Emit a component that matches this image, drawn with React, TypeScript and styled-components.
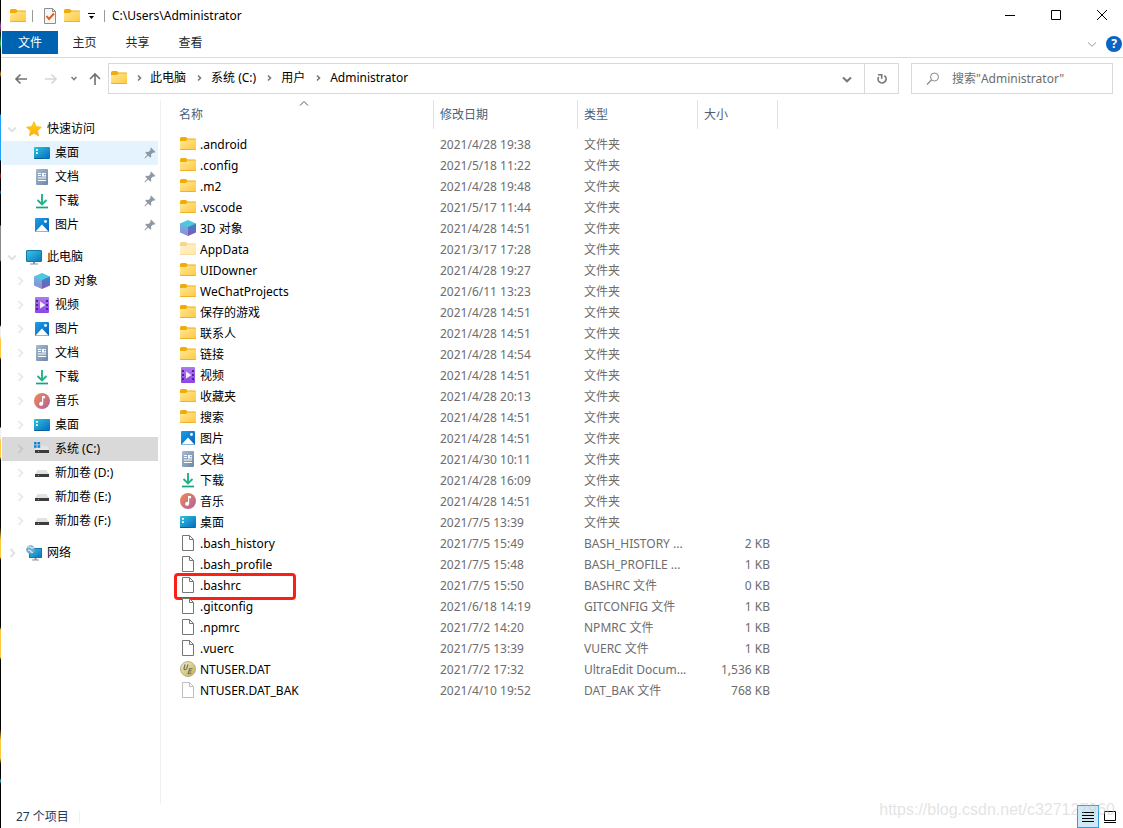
import React from "react";
import styled, { createGlobalStyle, css } from "styled-components";

/* ---------- data ---------- */

type IconName =
  | "folder" | "folderFaded" | "cube" | "video" | "picture" | "document" | "download"
  | "music" | "desktop" | "file" | "fileFaded" | "ultraedit" | "star" | "computer"
  | "systemDrive" | "drive" | "network";

interface FileEntry {
  icon: IconName;
  name: string;
  date: string;
  type: string;
  size?: string;
  marked?: boolean;
}

const FOLDER = "文件夹";

const files: FileEntry[] = [
  { icon: "folder", name: ".android", date: "2021/4/28 19:38", type: FOLDER },
  { icon: "folder", name: ".config", date: "2021/5/18 11:22", type: FOLDER },
  { icon: "folder", name: ".m2", date: "2021/4/28 19:48", type: FOLDER },
  { icon: "folder", name: ".vscode", date: "2021/5/17 11:44", type: FOLDER },
  { icon: "cube", name: "3D 对象", date: "2021/4/28 14:51", type: FOLDER },
  { icon: "folderFaded", name: "AppData", date: "2021/3/17 17:28", type: FOLDER },
  { icon: "folder", name: "UIDowner", date: "2021/4/28 19:27", type: FOLDER },
  { icon: "folder", name: "WeChatProjects", date: "2021/6/11 13:23", type: FOLDER },
  { icon: "folder", name: "保存的游戏", date: "2021/4/28 14:51", type: FOLDER },
  { icon: "folder", name: "联系人", date: "2021/4/28 14:51", type: FOLDER },
  { icon: "folder", name: "链接", date: "2021/4/28 14:54", type: FOLDER },
  { icon: "video", name: "视频", date: "2021/4/28 14:51", type: FOLDER },
  { icon: "folder", name: "收藏夹", date: "2021/4/28 20:13", type: FOLDER },
  { icon: "folder", name: "搜索", date: "2021/4/28 14:51", type: FOLDER },
  { icon: "picture", name: "图片", date: "2021/4/28 14:51", type: FOLDER },
  { icon: "document", name: "文档", date: "2021/4/30 10:11", type: FOLDER },
  { icon: "download", name: "下载", date: "2021/4/28 16:09", type: FOLDER },
  { icon: "music", name: "音乐", date: "2021/4/28 14:51", type: FOLDER },
  { icon: "desktop", name: "桌面", date: "2021/7/5 13:39", type: FOLDER },
  { icon: "file", name: ".bash_history", date: "2021/7/5 15:49", type: "BASH_HISTORY ...", size: "2 KB" },
  { icon: "file", name: ".bash_profile", date: "2021/7/5 15:48", type: "BASH_PROFILE ...", size: "1 KB" },
  { icon: "file", name: ".bashrc", date: "2021/7/5 15:50", type: "BASHRC 文件", size: "0 KB", marked: true },
  { icon: "file", name: ".gitconfig", date: "2021/6/18 14:19", type: "GITCONFIG 文件", size: "1 KB" },
  { icon: "file", name: ".npmrc", date: "2021/7/2 14:20", type: "NPMRC 文件", size: "1 KB" },
  { icon: "file", name: ".vuerc", date: "2021/7/5 13:39", type: "VUERC 文件", size: "1 KB" },
  { icon: "ultraedit", name: "NTUSER.DAT", date: "2021/7/2 17:32", type: "UltraEdit Docum...", size: "1,536 KB" },
  { icon: "fileFaded", name: "NTUSER.DAT_BAK", date: "2021/4/10 19:52", type: "DAT_BAK 文件", size: "768 KB" },
];

interface TreeNode {
  icon: IconName;
  label: string;
  pinned?: boolean;
  state?: "hover" | "current";
}

interface TreeGroup extends TreeNode {
  open?: boolean;
  children: TreeNode[];
}

const tree: TreeGroup[] = [
  {
    icon: "star", label: "快速访问", open: true,
    children: [
      { icon: "desktop", label: "桌面", pinned: true, state: "hover" },
      { icon: "document", label: "文档", pinned: true },
      { icon: "download", label: "下载", pinned: true },
      { icon: "picture", label: "图片", pinned: true },
    ],
  },
  {
    icon: "computer", label: "此电脑", open: true,
    children: [
      { icon: "cube", label: "3D 对象" },
      { icon: "video", label: "视频" },
      { icon: "picture", label: "图片" },
      { icon: "document", label: "文档" },
      { icon: "download", label: "下载" },
      { icon: "music", label: "音乐" },
      { icon: "desktop", label: "桌面" },
      { icon: "systemDrive", label: "系统 (C:)", state: "current" },
      { icon: "drive", label: "新加卷 (D:)" },
      { icon: "drive", label: "新加卷 (E:)" },
      { icon: "drive", label: "新加卷 (F:)" },
    ],
  },
  { icon: "network", label: "网络", children: [] },
];

/* ---------- icons ---------- */

const Svg = styled.svg`
  display: block;
  flex: none;
`;

const gradient = (id: string, from: string, to: string, diagonal = false) => (
  <linearGradient id={id} x1="0" y1="0" x2={diagonal ? "1" : "0"} y2="1">
    <stop offset="0" stopColor={from} />
    <stop offset="1" stopColor={to} />
  </linearGradient>
);

const pageShape = "M2.5 .5h7l4 4v11h-11z";

const shapes: Record<IconName, (id: string) => React.ReactNode> = {
  folder: (id) => (
    <>
      {gradient(id, "#ffe799", "#ffc93f", true)}
      <path d="M0 2.5Q0 1 1.5 1H6l1.5 1.5H15q1 0 1 1V7H0z" fill="#f2ac08" />
      <path d="M0 5h6l1.5-1.5H16V13q0 1-1 1H1q-1 0-1-1z" fill={`url(#${id})`} />
      <path d="M0 13h16q0 1-1 1H1q-1 0-1-1z" fill="#eeb12b" />
    </>
  ),
  folderFaded: (id) => (
    <>
      {gradient(id, "#fff4cf", "#ffe6a3", true)}
      <path d="M0 2.5Q0 1 1.5 1H6l1.5 1.5H15q1 0 1 1V7H0z" fill="#f8d588" />
      <path d="M0 5h6l1.5-1.5H16V13q0 1-1 1H1q-1 0-1-1z" fill={`url(#${id})`} />
      <path d="M0 13h16q0 1-1 1H1q-1 0-1-1z" fill="#f5dba0" />
    </>
  ),
  cube: (id) => (
    <>
      {gradient(id, "#6db6df", "#8f8ad6")}
      {gradient(`${id}r`, "#3388c9", "#8a56b8")}
      <path d="M8 0l8 3.5V4L8 8 0 4v-.5z" fill="#4cc8e0" />
      <path d="M0 3.500l8 3.500v9l-8-3.500z" fill={`url(#${id})`} />
      <path d="M16 3.500l-8 3.500v9l8-3.500z" fill={`url(#${id}r)`} />
    </>
  ),
  video: (id) => (
    <>
      {gradient(id, "#b078f0", "#8b45e6")}
      <rect x="1" y="0" width="14" height="16" rx="1" fill={`url(#${id})`} />
      <path d="M2 3h2v2H2zM2 7h2v2H2zM2 11h2v2H2zM12 3h2v2h-2zM12 7h2v2h-2zM12 11h2v2h-2z" fill="#4f2590" />
      <path d="M6 4.500L11.500 8 6 11.500z" fill="#f4eefc" />
    </>
  ),
  picture: (id) => (
    <>
      {gradient(id, "#1ba0e8", "#0561b8", true)}
      <rect x="1" y="1" width="14" height="14" rx="1" fill={`url(#${id})`} />
      <path d="M1.500 14.500L8 7.500l6.500 7z" fill="#fff" />
      <circle cx="11.500" cy="4.500" r="1.400" fill="#fff" />
    </>
  ),
  document: (id) => (
    <>
      {gradient(id, "#a7bad0", "#6d88a6", true)}
      <rect x="2" y="0" width="12" height="16" rx="1" fill={`url(#${id})`} />
      <path d="M4 4h3v1H4zM4 6h3v1H4zM8 4h4v3.500H8zM4 8.500h8v1H4zM4 11h8v1H4z" fill="#fff" />
      <path d="M10 4.800h1.500v1.500H10z" fill="#7790ad" />
    </>
  ),
  download: () => (
    <>
      <path d="M8 1v10M3.500 7L8 11.500 12.500 7" fill="none" stroke="#1fb488" strokeWidth="1.900" />
      <path d="M2 14.500h12" stroke="#16a085" strokeWidth="1.700" />
    </>
  ),
  music: (id) => (
    <>
      {gradient(id, "#f18a52", "#b35fa0", true)}
      <circle cx="8" cy="8" r="8" fill={`url(#${id})`} />
      <path d="M8 3h3v2.200H9.200v5.600a2 2 0 1 1-1.200-1.800z" fill="#fff" />
    </>
  ),
  desktop: (id) => (
    <>
      {gradient(id, "#2cc4e0", "#0867bd", true)}
      <rect x="0" y="2" width="16" height="12" rx="1" fill={`url(#${id})`} />
      <path d="M2 4h1.800v1.800H2zM2 7.300h1.800v1.800H2z" fill="#fff" />
      <path d="M0 13h10v1H1q-1 0-1-1zM11 13h1v1h-1zM13 13h1v1h-1z" fill="#0a5d96" />
    </>
  ),
  file: () => (
    <>
      <path d={pageShape} fill="#fff" stroke="#767676" />
      <path d="M9.500 .5v4h4" fill="none" stroke="#767676" />
    </>
  ),
  fileFaded: () => (
    <>
      <path d={pageShape} fill="#fff" stroke="#c0c0c0" />
      <path d="M9.500 .5v4h4" fill="none" stroke="#c0c0c0" />
    </>
  ),
  ultraedit: (id) => (
    <>
      {gradient(id, "#f5efc4", "#c4ac4c", true)}
      <circle cx="8" cy="8" r="7.500" fill={`url(#${id})`} stroke="#b3ae94" />
      <path d="M5 3.500L4 7.500q0 1.500 1.500 1 1.300-.4 1.600-2l.7-3M12.500 7.500l-3 .3-1.200 4.700 3-.3M9 10l2.500-.3" fill="none" stroke="#6f7268" strokeWidth="1.200" />
    </>
  ),
  star: (id) => (
    <>
      {gradient(id, "#ffd60a", "#fbac10")}
      <path d="M8 .8l2.200 4.800 5.200.6-3.900 3.500 1.100 5.200L8 12.300l-4.600 2.600 1.100-5.200L.6 6.200l5.200-.6z" fill={`url(#${id})`} stroke="#f9b71c" strokeWidth=".8" />
    </>
  ),
  computer: (id) => (
    <>
      {gradient(id, "#37cce0", "#0b72bd", true)}
      <rect x=".5" y="1.500" width="15" height="11" rx=".5" fill={`url(#${id})`} stroke="#1477ab" />
      <path d="M7 13h2v1.500h3v1H4v-1h3z" fill="#8495a3" />
    </>
  ),
  systemDrive: () => (
    <>
      <path d="M0 1h2.600v2.500H0zM3.500 1h2.600v2.500H3.500zM0 4.300h2.600v2.500H0zM3.500 4.300h2.600v2.500H3.500z" fill="#0c84d8" />
      <path d="M7 5h6l2 4H1l1-2h5z" fill="#e3e5e9" />
      <rect x="1" y="9" width="14" height="3" fill="#3c3c3c" />
      <path d="M4 10h1v1H4z" fill="#39e05b" />
    </>
  ),
  drive: () => (
    <>
      <path d="M3.500 5h9L15 9H1z" fill="#dfe1e5" />
      <rect x="1" y="9" width="14" height="3" fill="#3c3c3c" />
      <path d="M4 10h1v1H4z" fill="#39e05b" />
    </>
  ),
  network: (id) => (
    <>
      {gradient(id, "#37c4e4", "#0b72bd", true)}
      <rect x="3.500" y="3.500" width="12" height="9" fill={`url(#${id})`} stroke="#1477ab" />
      <path d="M8.500 13h2v1.500H13v1H6v-1h2.500z" fill="#8495a3" />
      <circle cx="4.500" cy="4.500" r="4.300" fill="#6fa9cc" />
      <path d="M1.500 2.500q2-1.500 3.500 0t2.500-.5M2 5.500q2-1 2.500.5T7 7.500" fill="none" stroke="#d8edf6" strokeWidth="1.200" />
    </>
  ),
};

const Icon = ({ name }: { name: IconName }) => {
  const id = "g" + React.useId().replace(/[^a-zA-Z0-9]/g, "");
  return (
    <Svg width="16" height="16" viewBox="0 0 16 16" aria-hidden="true">
      {shapes[name](id)}
    </Svg>
  );
};

interface GlyphProps {
  d: string;
  size?: number;
  color?: string;
  weight?: number;
}

const Glyph = ({ d, size = 16, color = "#000", weight = 1 }: GlyphProps) => (
  <Svg width={size} height={size} viewBox={`0 0 ${size} ${size}`} aria-hidden="true">
    <path d={d} fill="none" stroke={color} strokeWidth={weight} />
  </Svg>
);

const glyphs = {
  chevronDown: "M1 3.500L5 7.300l4-3.800",
  chevronRight: "M3.500 1L7.300 5 3.500 9",
  crumbRight: "M4 2.500L6.500 5 4 7.500",
  back: "M14 8H3M7.500 3.500L3 8l4.500 4.500",
  forward: "M2 8h11M8.500 3.500L13 8l-4.500 4.500",
  up: "M8 14V3M3 8l5-5 5 5",
};

const Pin = () => (
  <Svg width="12" height="12" viewBox="0 0 12 12" aria-hidden="true">
    <path d="M7 .5l4.500 4.500-1.300.7-1-.3L7 7.600l.2 2.200-1 .9L4.200 8.600 1 11.500l-.6-.5L3.300 7.700 1.300 5.800l1-1 2.200.2 2.200-2.200-.4-1z" fill="#8c98a4" />
  </Svg>
);

/* ---------- shell ---------- */

const GlobalStyle = createGlobalStyle`
  * { box-sizing: border-box; }
  body {
    margin: 0;
    background: #fff;
    font: 12px/16px "Noto Sans", "Noto Sans CJK SC", sans-serif;
    color: #000;
  }
  button, input {
    font: inherit;
    color: inherit;
    border: 0;
    padding: 0;
    background: none;
  }
  ul, ol { list-style: none; margin: 0; padding: 0; }
`;

const Window = styled.div`
  position: relative;
  display: flex;
  flex-direction: column;
  min-height: 100vh;
  padding-left: 1px;
  background:
    linear-gradient(#000 0 20px, #a3459b 26px, #08160c 34px, #31b54a 44px, #000 50px 70px, #c07a20 74px, #000 78px 114px, #1da2f5 115px 160px, #000 161px 172px, #b01a1a 176px, #000 180px 190px, #2463c8 192px, #000 195px 225px, #888 226px 260px, #000 262px 325px, #eee 327px 337px, #ffc93f 339px 357px, #000 360px 427px, #eee 428px 438px, #ffc93f 440px 457px, #000 460px 527px, #ffc93f 540px 557px, #000 560px 627px, #ffc93f 630px 657px, #000 660px 729px, #ffc93f 740px 758px, #000 764px 778px, #35a6d8 781px, #000 784px)
    left top / 1px 100% no-repeat,
    #fff;
`;

const Spacer = styled.div`
  flex: 1;
`;

/* ---------- title bar ---------- */

const TitleBar = styled.header`
  display: flex;
  align-items: center;
  height: 31px;
  padding-left: 9px;
`;

const QuickButton = styled.button<{ $narrow?: boolean }>`
  display: grid;
  place-items: center;
  width: ${(p) => (p.$narrow ? 12 : 16)}px;
  height: 16px;
`;

const QuickAccess = styled.div`
  display: flex;
  align-items: center;
  gap: 6px;
`;

const Divider = styled.span`
  width: 1px;
  height: 12px;
  margin-right: 3px;
  background: #9a9a9a;
`;

const Title = styled.h1`
  margin: 0 0 0 4px;
  font-size: 12px;
  font-weight: 400;
  line-height: 16px;
`;

const WindowButtons = styled.div`
  display: flex;
  margin-right: -2px;
  overflow: hidden;
`;

const WindowButton = styled.button`
  display: grid;
  place-items: center;
  width: 46px;
  height: 31px;
`;

/* ---------- ribbon ---------- */

const Ribbon = styled.nav`
  display: flex;
  align-items: flex-start;
  height: 27px;
  padding-left: 1px;
  border-bottom: 1px solid #dadbdc;
`;

const RibbonTab = styled.button<{ $primary?: boolean }>`
  width: ${(p) => (p.$primary ? 56 : 53)}px;
  height: 23px;
  padding-top: 1px;
  text-align: center;
  color: ${(p) => (p.$primary ? "#fff" : "#262626")};
  background: ${(p) => (p.$primary ? "#0063b1" : "transparent")};
`;

const RibbonTools = styled.div`
  display: flex;
  align-items: center;
  gap: 8px;
  height: 26px;
  padding-right: 1px;
`;

const HelpButton = styled.button`
  width: 16px;
  height: 16px;
  border-radius: 50%;
  background: #0a64c4;
  color: #fff;
  font-weight: 700;
  line-height: 16px;
  text-align: center;
`;

/* ---------- address row ---------- */

const AddressRow = styled.div`
  display: flex;
  align-items: center;
  padding: 5px 10px 6px 12px;
`;

const NavButtons = styled.div`
  display: flex;
  align-items: center;
  width: 95px;
`;

const NavButton = styled.button<{ $width: number }>`
  display: grid;
  place-items: center start;
  width: ${(p) => p.$width}px;
  height: 24px;
`;

const AddressBox = styled.div`
  display: flex;
  flex: 1;
  height: 31px;
  border: 1px solid #d9d9d9;
`;

const Crumbs = styled.ol`
  display: flex;
  flex: 1;
  align-items: center;
  padding: 0 0 1px 2px;
`;

const CrumbArrow = styled.span`
  display: grid;
  place-items: center;
  width: 25px;
`;

const Crumb = styled.li`
  display: flex;
  align-items: center;
  &:first-of-type ${CrumbArrow} {
    width: 23px;
  }
`;

const CrumbLink = styled.a`
  color: #000;
  text-decoration: none;
`;

const AddressButton = styled.button<{ $ruled?: boolean }>`
  display: grid;
  place-items: center;
  width: 34px;
  border-left: ${(p) => (p.$ruled ? "1px solid #d9d9d9" : "0")};
`;

const SearchBox = styled.label`
  display: flex;
  align-items: center;
  gap: 12px;
  width: 202px;
  height: 31px;
  margin-left: 12px;
  padding-left: 14px;
  border: 1px solid #d9d9d9;
`;

const SearchInput = styled.input`
  flex: 1;
  min-width: 0;
  height: 20px;
  outline: 0;
  &::placeholder {
    color: #6d6d6d;
    opacity: 1;
  }
`;

/* ---------- body ---------- */

const Body = styled.div`
  display: flex;
  flex: 1;
`;

const Sidebar = styled.nav`
  display: flex;
  flex-direction: column;
  gap: 8px;
  width: 160px;
  padding: 17px 2px 0 1px;
  border-right: 1px solid #f0f0f0;
`;

const TreeRow = styled.button<{ $nested?: boolean; $state?: "hover" | "current" }>`
  display: flex;
  align-items: center;
  width: 100%;
  height: 24px;
  padding-left: ${(p) => (p.$nested ? 10 : 2)}px;
  padding-right: 2px;
  text-align: left;
  ${(p) => p.$state === "hover" && css`background: #e5f3ff;`}
  ${(p) => p.$state === "current" && css`background: #d9d9d9;`}
`;

const TreeArrow = styled.span`
  display: grid;
  place-items: center;
  width: 16px;
  margin-right: 6px;
`;

const TreeLabel = styled.span`
  flex: 1;
  margin-left: 5px;
  white-space: nowrap;
`;

const Main = styled.main`
  flex: 1;
  min-width: 0;
`;

const FileTable = styled.table`
  width: 617px;
  table-layout: fixed;
  border-collapse: collapse;
`;

const HeaderCell = styled.th<{ $width: number }>`
  position: relative;
  width: ${(p) => p.$width}px;
  padding: 0 0 5px;
  color: #4c607a;
  font-weight: 400;
  text-align: left;
`;

const HeaderLabel = styled.div<{ $indent: number }>`
  height: 29px;
  padding-left: ${(p) => p.$indent}px;
  border-right: 1px solid #e2e2e2;
  line-height: 29px;
`;

const SortMark = styled.span`
  position: absolute;
  top: -2px;
  left: 50%;
`;

const Cell = styled.td<{ $align?: "right" }>`
  height: 21px;
  padding: 0 8px 0 6px;
  color: #6d6d6d;
  line-height: 20px;
  text-align: ${(p) => p.$align ?? "left"};
  white-space: nowrap;
`;

const NameCell = styled.td`
  position: relative;
  height: 21px;
  padding: 0 0 0 19px;
`;

const FileName = styled.div`
  display: flex;
  align-items: center;
  gap: 4px;
  height: 20px;
  ${Svg} {
    margin-bottom: 2px;
  }
`;

const Marker = styled.span`
  position: absolute;
  inset: -2px auto -4px 13px;
  width: 122px;
  border: 3px solid #fb2016;
  border-radius: 4px;
  pointer-events: none;
`;

/* ---------- status bar ---------- */

const StatusBar = styled.footer`
  display: flex;
  align-items: center;
  height: 24px;
  padding: 1px 2px 0 15px;
  color: #1e395b;
`;

const StatusText = styled.span`
  padding-right: 10px;
  border-right: 1px solid #f0f0f0;
  line-height: 12px;
`;

const ViewButton = styled.button<{ $active?: boolean }>`
  display: grid;
  place-items: center;
  width: 22px;
  height: 23px;
  border: 1px solid ${(p) => (p.$active ? "#2a9fdc" : "transparent")};
  background: ${(p) => (p.$active ? "#cfe8f6" : "transparent")};
`;

const Watermark = styled.span`
  position: absolute;
  right: 8px;
  bottom: 8px;
  color: rgba(200, 200, 200, 0.5);
  font: 16px/20px "Liberation Sans", sans-serif;
  pointer-events: none;
`;

/* ---------- components ---------- */

const TreeItem = ({ node, nested, arrow }: { node: TreeNode; nested?: boolean; arrow?: string }) => (
  <TreeRow type="button" $nested={nested} $state={node.state}>
    <TreeArrow>
      {arrow && (
        <Glyph
          d={arrow}
          size={10}
          color={node.state === "current" ? "#c9c9c9" : nested ? "#ececec" : "#e2e2e2"}
          weight={2}
        />
      )}
    </TreeArrow>
    <Icon name={node.icon} />
    <TreeLabel>{node.label}</TreeLabel>
    {node.pinned && <Pin />}
  </TreeRow>
);

const columns = [
  { label: "名称", width: 273, indent: 18 },
  { label: "修改日期", width: 144, indent: 6 },
  { label: "类型", width: 120, indent: 6 },
  { label: "大小", width: 80, indent: 6 },
];

const crumbs = ["此电脑", "系统 (C:)", "用户", "Administrator"];

export default function App() {
  return (
    <>
      <GlobalStyle />
      <Window>
        <TitleBar>
          <QuickAccess>
            <Icon name="folder" />
            <Divider />
            <QuickButton type="button" aria-label="属性">
              <Svg width="16" height="16" viewBox="0 0 16 16">
                <path d="M2.500 .5h8l3 3v12h-11z" fill="#f5f6f7" stroke="#8d8d8d" />
                <path d="M10.500 .5v3h3" fill="none" stroke="#8d8d8d" />
                <path d="M4.500 8l2.500 3 5-5.500" fill="none" stroke="#e8591c" strokeWidth="1.900" />
              </Svg>
            </QuickButton>
            <QuickButton type="button" aria-label="新建文件夹">
              <Icon name="folder" />
            </QuickButton>
            <QuickButton type="button" $narrow aria-label="自定义快速访问工具栏">
              <Svg width="8" height="8" viewBox="0 0 8 8">
                <path d="M0 1h7v1H0zM1 4h5L3.500 7z" />
              </Svg>
            </QuickButton>
            <Divider />
          </QuickAccess>
          <Title>C:\Users\Administrator</Title>
          <Spacer />
          <WindowButtons>
            <WindowButton type="button" aria-label="最小化">
              <Glyph d="M3 7.500h10" />
            </WindowButton>
            <WindowButton type="button" aria-label="最大化">
              <Glyph d="M3.500 2.500h9v9h-9z" />
            </WindowButton>
            <WindowButton type="button" aria-label="关闭">
              <Glyph d="M3 2l10 10M13 2L3 12" />
            </WindowButton>
          </WindowButtons>
        </TitleBar>

        <Ribbon>
          <RibbonTab type="button" $primary>文件</RibbonTab>
          <RibbonTab type="button">主页</RibbonTab>
          <RibbonTab type="button">共享</RibbonTab>
          <RibbonTab type="button">查看</RibbonTab>
          <Spacer />
          <RibbonTools>
            <QuickButton type="button" $narrow aria-label="展开功能区">
              <Glyph d={glyphs.chevronDown} size={10} color="#999" />
            </QuickButton>
            <HelpButton type="button">?</HelpButton>
          </RibbonTools>
        </Ribbon>

        <AddressRow>
          <NavButtons>
            <NavButton type="button" $width={30} aria-label="返回">
              <Glyph d={glyphs.back} color="#707070" weight={1.6} />
            </NavButton>
            <NavButton type="button" $width={26} aria-label="前进">
              <Glyph d={glyphs.forward} color="#d6d6d6" weight={1.6} />
            </NavButton>
            <NavButton type="button" $width={18} aria-label="最近浏览的位置">
              <Glyph d="M2.500 3L5 5.500 7.500 3" size={10} color="#808080" weight={1.6} />
            </NavButton>
            <NavButton type="button" $width={20} aria-label="向上">
              <Glyph d={glyphs.up} color="#707070" weight={1.6} />
            </NavButton>
          </NavButtons>
          <AddressBox>
            <Crumbs>
              <Icon name="folder" />
              {crumbs.map((crumb) => (
                <Crumb key={crumb}>
                  <CrumbArrow>
                    <Glyph d={glyphs.crumbRight} size={10} color="#777" weight={1.6} />
                  </CrumbArrow>
                  <CrumbLink href="#">{crumb}</CrumbLink>
                </Crumb>
              ))}
            </Crumbs>
            <AddressButton type="button" aria-label="以前的位置">
              <Glyph d={glyphs.chevronDown} size={10} color="#777" weight={2} />
            </AddressButton>
            <AddressButton type="button" $ruled aria-label="刷新">
              <Svg width="12" height="12" viewBox="0 0 12 12">
                <path d="M8.300 2.600A4 4 0 1 1 2.600 4" fill="none" stroke="#777" strokeWidth="1.700" />
                <path d="M2 1.800h3.700v3.900" fill="none" stroke="#777" strokeWidth="1.600" />
              </Svg>
            </AddressButton>
          </AddressBox>
          <SearchBox>
            <Svg width="14" height="14" viewBox="0 0 14 14" aria-hidden="true">
              <circle cx="8.500" cy="5" r="4" fill="none" stroke="#8a8a8a" />
              <path d="M5.500 8L1 12.500" stroke="#8a8a8a" strokeWidth="1.200" />
            </Svg>
            <SearchInput type="text" aria-label="搜索" placeholder={'搜索"Administrator"'} />
          </SearchBox>
        </AddressRow>

        <Body>
          <Sidebar>
            {tree.map((group) => (
              <div key={group.label}>
                <TreeItem node={group} arrow={group.open ? glyphs.chevronDown : glyphs.chevronRight} />
                {group.children.length > 0 && (
                  <ul>
                    {group.children.map((node) => (
                      <li key={node.label}>
                        <TreeItem node={node} nested arrow={node.pinned ? undefined : glyphs.chevronRight} />
                      </li>
                    ))}
                  </ul>
                )}
              </div>
            ))}
          </Sidebar>

          <Main>
            <FileTable>
              <thead>
                <tr>
                  {columns.map((column, index) => (
                    <HeaderCell key={column.label} $width={column.width} scope="col">
                      <HeaderLabel $indent={column.indent}>{column.label}</HeaderLabel>
                      {index === 0 && (
                        <SortMark>
                          <Glyph d="M2 7.500L6 3.500l4 4" size={12} color="#555" />
                        </SortMark>
                      )}
                    </HeaderCell>
                  ))}
                </tr>
              </thead>
              <tbody>
                {files.map((file) => (
                  <tr key={file.name}>
                    <NameCell>
                      <FileName>
                        <Icon name={file.icon} />
                        {file.name}
                      </FileName>
                      {file.marked && <Marker />}
                    </NameCell>
                    <Cell>{file.date}</Cell>
                    <Cell>{file.type}</Cell>
                    <Cell $align="right">{file.size}</Cell>
                  </tr>
                ))}
              </tbody>
            </FileTable>
          </Main>
        </Body>

        <StatusBar>
          <StatusText>27 个项目</StatusText>
          <Spacer />
          <ViewButton type="button" $active aria-label="详细信息">
            <Glyph d="M2 3.500h12M2 6.500h12M2 9.500h12M2 12.500h12" />
          </ViewButton>
          <ViewButton type="button" aria-label="大图标">
            <Glyph d="M2.500 2.500h11v9h-11zM2 13.500h12" />
          </ViewButton>
        </StatusBar>
        <Watermark>https://blog.csdn.net/c327127960</Watermark>
      </Window>
    </>
  );
}
